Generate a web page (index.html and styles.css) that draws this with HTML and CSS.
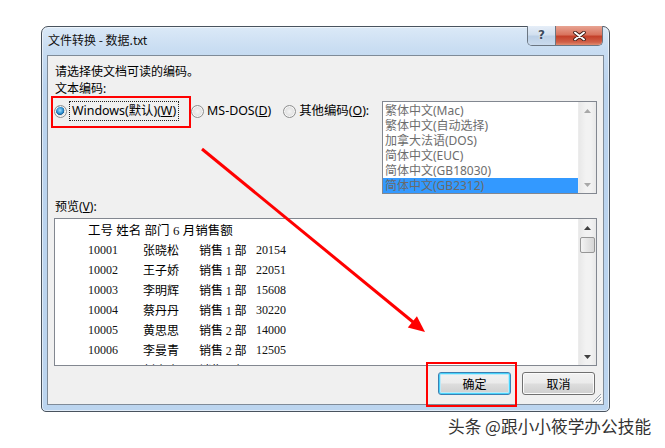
FILE: index.html
```html
<!DOCTYPE html>
<html lang="zh-CN">
<head>
<meta charset="utf-8">
<title>文件转换</title>
<link rel="stylesheet" href="styles.css">
</head>
<body>
<div class="window">
  <div class="titlebar">
    <span class="title">文件转换 - 数据.txt</span>
    <div class="caption-btns">
      <span class="cap-help">?</span>
      <span class="cap-close">
        <svg width="13" height="10" viewBox="0 0 13 10"><path d="M2 1.5 L11 8.5 M11 1.5 L2 8.5" stroke="#3a1a14" stroke-width="3.6" stroke-linecap="round"/><path d="M2 1.5 L11 8.5 M11 1.5 L2 8.5" stroke="#fff" stroke-width="2" stroke-linecap="round"/></svg>
      </span>
    </div>
  </div>
  <div class="client">
    <div class="line intro">请选择使文档可读的编码。</div>
    <div class="line label">文本编码:</div>
    <div class="enc-row">
      <div class="radios">
        <span class="radio checked"></span>
        <span class="focus">Windows(默认)(<u>W</u>)</span>
        <span class="radio gap1"></span>
        <span class="rlabel">MS-DOS(<u>D</u>)</span>
        <span class="radio gap2"></span>
        <span class="rlabel">其他编码(<u>O</u>):</span>
      </div>
      <div class="listbox">
        <div class="items">
          <div class="item">繁体中文(Mac)</div>
          <div class="item">繁体中文(自动选择)</div>
          <div class="item">加拿大法语(DOS)</div>
          <div class="item">简体中文(EUC)</div>
          <div class="item">简体中文(GB18030)</div>
          <div class="item selected">简体中文(GB2312)</div>
        </div>
        <div class="vscroll disabled">
          <span class="arrow"><svg width="7" height="4" viewBox="0 0 7 4"><path d="M0 4 L3.5 0 L7 4Z" fill="#a8a8a8"/></svg></span>
          <span class="track"></span>
          <span class="arrow"><svg width="7" height="4" viewBox="0 0 7 4"><path d="M0 0 L3.5 4 L7 0Z" fill="#a8a8a8"/></svg></span>
        </div>
      </div>
    </div>
    <div class="line plabel">预览(<u>V</u>):</div>
    <div class="preview">
      <div class="ptext">
        <div class="phead">工号 姓名 部门 <span class="num">6</span> 月销售额</div>
        <div class="prow"><span class="num">10001</span><span>张晓松</span><span>销售 <span class="num">1</span> 部</span><span class="num">20154</span></div>
        <div class="prow"><span class="num">10002</span><span>王子娇</span><span>销售 <span class="num">1</span> 部</span><span class="num">22051</span></div>
        <div class="prow"><span class="num">10003</span><span>李明辉</span><span>销售 <span class="num">1</span> 部</span><span class="num">15608</span></div>
        <div class="prow"><span class="num">10004</span><span>蔡丹丹</span><span>销售 <span class="num">1</span> 部</span><span class="num">30220</span></div>
        <div class="prow"><span class="num">10005</span><span>黄思思</span><span>销售 <span class="num">2</span> 部</span><span class="num">14000</span></div>
        <div class="prow"><span class="num">10006</span><span>李曼青</span><span>销售 <span class="num">2</span> 部</span><span class="num">12505</span></div>
        <div class="prow"><span class="num">10007</span><span>刘小小</span><span>销售 <span class="num">2</span> 部</span><span class="num">16800</span></div>
      </div>
      <div class="vscroll">
        <span class="arrow"><svg width="7" height="4" viewBox="0 0 7 4"><path d="M0 4 L3.5 0 L7 4Z" fill="#404040"/></svg></span>
        <span class="thumb"></span>
        <span class="track"></span>
        <span class="arrow"><svg width="7" height="4" viewBox="0 0 7 4"><path d="M0 0 L3.5 4 L7 0Z" fill="#404040"/></svg></span>
      </div>
    </div>
    <div class="buttons">
      <button class="btn default">确定</button>
      <button class="btn">取消</button>
    </div>
    <svg class="grip" width="11" height="11" viewBox="0 0 11 11"><path d="M10 2 L2 10 M10 5 L5 10 M10 8 L8 10" stroke="#9aa3ad" stroke-width="1"/><path d="M11 3 L3 11 M11 6 L6 11 M11 9 L9 11" stroke="#ffffff" stroke-width="1"/></svg>
  </div>
</div>

<div class="mark mark-radio"></div>
<div class="mark mark-ok"></div>
<svg class="arrow-overlay" width="665" height="448" viewBox="0 0 665 448">
  <line x1="202" y1="149" x2="413" y2="322" stroke="#ff0000" stroke-width="3"/>
  <polygon points="425,332 407.8,327.5 416.9,316.3" fill="#ff0000"/>
</svg>
<div class="watermark">头条 @跟小小筱学办公技能</div>
</body>
</html>
```
FILE: styles.css
```css
html, body {
  margin: 0;
  padding: 0;
}
body {
  width: 665px;
  height: 448px;
  overflow: hidden;
  background: #ffffff;
  position: relative;
  font-family: "Noto Sans", "Noto Sans CJK SC", sans-serif;
  font-size: 12px;
  color: #000;
}
.window {
  margin: 26px 0 0 41px;
  width: 569px;
  height: 386px;
  box-sizing: border-box;
  border: 1px solid #49535e;
  border-radius: 7px 7px 5px 5px;
  background: linear-gradient(180deg, #dbe9f7 0px, #c9ddf2 22px, #bad3ee 60px, #bcd5ef 100%);
  box-shadow: inset 0 0 0 1px rgba(255,255,255,0.55);
  padding: 0 5px 6px 5px;
  display: flex;
  flex-direction: column;
}
.titlebar {
  height: 28px;
  display: flex;
  align-items: flex-start;
}
.title {
  margin-top: 5px;
  padding-left: 1px;
  line-height: 16px;
  font-family: "Noto Sans CJK SC", sans-serif;
  font-size: 12px;
  color: #111;
}
.caption-btns {
  margin-left: auto;
  margin-right: 1px;
  margin-top: -1px;
  display: flex;
  height: 19px;
  border: 1px solid #6b7682;
  border-top: none;
  border-radius: 0 0 5px 5px;
  overflow: hidden;
}
.cap-help {
  width: 27px;
  height: 19px;
  border-right: 1px solid #6b7682;
  background: linear-gradient(180deg, #e6eef8 0%, #d2e0ef 45%, #bcd0e6 55%, #cadbee 100%);
  font-family: "DejaVu Sans", sans-serif;
  font-weight: bold;
  font-size: 12px;
  line-height: 18px;
  text-align: center;
  color: #3c4c5e;
  text-shadow: 0 0 2px #fff;
}
.cap-close {
  width: 46px;
  height: 19px;
  background: linear-gradient(180deg, #e8a493 0%, #d9745e 45%, #c4412a 55%, #d06048 85%, #e08c70 100%);
  display: flex;
  align-items: center;
  justify-content: center;
}
.client {
  position: relative;
  flex: 1;
  background: #f0f0f0;
  border: 1px solid #7f8b98;
  padding: 8px 6px 0 6px;
  display: flex;
  flex-direction: column;
  font-family: "Noto Sans", "Noto Sans CJK SC", sans-serif;
}
.line {
  line-height: 16px;
  height: 16px;
  padding-left: 1px;
  white-space: nowrap;
}
.label {
  margin-top: 1px;
}
u {
  text-decoration: underline;
  text-underline-offset: 1px;
}
.enc-row {
  margin-top: 4px;
  display: flex;
  align-items: flex-start;
  height: 93px;
}
.radios {
  display: flex;
  align-items: center;
  height: 20px;
  white-space: nowrap;
  font-size: 12.4px;
}
.radio {
  width: 11px;
  height: 11px;
  border-radius: 50%;
  border: 1px solid #8e8f8f;
  background: radial-gradient(circle at 50% 50%, #f4f4f4 0%, #e0e0e0 60%, #cfcfcf 100%);
  box-shadow: inset 0 0 0 1px #f8f8f8;
  flex: none;
}
.radio.checked {
  background: radial-gradient(circle at 45% 40%, #9fe0ff 0%, #2e8fd0 35%, #1a5f93 48%, #e6e6e6 52%, #d6d6d6 100%);
}
.radio.gap1 {
  margin-left: 12px;
}
.radio.gap2 {
  margin-left: 12px;
}
.focus {
  margin-left: 2px;
  border: 1px dotted #222;
  padding: 0 2px;
  line-height: 18px;
}
.rlabel {
  margin-left: 3px;
  line-height: 18px;
}
.listbox {
  margin-left: auto;
  width: 215px;
  height: 93px;
  box-sizing: border-box;
  border: 1px solid #828790;
  background: #fff;
  display: flex;
}
.items {
  flex: 1;
  padding-top: 1px;
  overflow: hidden;
}
.item {
  height: 15px;
  line-height: 15px;
  padding-left: 2px;
  color: #6d6d6d;
  white-space: nowrap;
}
.item.selected {
  background: #3399ff;
  color: #6a6a6a;
}
.vscroll {
  width: 17px;
  flex: none;
  display: flex;
  flex-direction: column;
  background: linear-gradient(90deg, #e8e8e8, #f2f2f2 40%, #f2f2f2 70%, #e8e8e8);
  border-left: 1px solid #ececec;
}
.vscroll .arrow {
  height: 17px;
  display: flex;
  align-items: center;
  justify-content: center;
  flex: none;
}
.vscroll .track {
  flex: 1;
}
.vscroll .thumb {
  margin: 1px 1px 0 1px;
  height: 14px;
  border: 1px solid #969696;
  border-radius: 2px;
  background: linear-gradient(90deg, #f3f3f3, #e4e4e4 50%, #d6d6d6);
  flex: none;
}
.plabel {
  margin-top: 5px;
}
.preview {
  margin-top: 3px;
  height: 148px;
  box-sizing: border-box;
  border: 1px solid #828790;
  background: #fff;
  display: flex;
  overflow: hidden;
}
.ptext {
  flex: 1;
  padding: 1px 0 0 33px;
  overflow: hidden;
  font-family: "Noto Sans CJK SC", sans-serif;
}
.phead {
  height: 20px;
  line-height: 20px;
  font-size: 12.5px;
  word-spacing: 0.5px;
  white-space: nowrap;
}
.prow {
  height: 20px;
  line-height: 20px;
  display: grid;
  grid-template-columns: 55px 56px 57px auto;
  font-size: 12px;
  white-space: nowrap;
}
.num {
  font-family: "Liberation Serif", serif;
  font-size: 12px;
  color: #111;
}
.phead .num {
  font-size: 13px;
}
.buttons {
  margin-top: 6px;
  margin-right: 2px;
  display: flex;
  justify-content: flex-end;
  gap: 11px;
}
.btn {
  width: 73px;
  height: 23px;
  box-sizing: border-box;
  border: 1px solid #707070;
  border-radius: 3px;
  background: linear-gradient(180deg, #f2f2f2 0%, #ebebeb 48%, #dddddd 52%, #cfcfcf 100%);
  box-shadow: inset 0 0 0 1px #fbfbfb;
  font-family: "Noto Sans CJK SC", sans-serif;
  font-size: 12px;
  color: #000;
  padding: 0;
  line-height: 20px;
}
.btn.default {
  border-color: #3c7fb1;
  box-shadow: inset 0 0 0 1px #48d3fb, inset 0 0 0 2px #bde9f8;
}
.grip {
  position: absolute;
  right: 1px;
  bottom: 1px;
}
.mark {
  position: absolute;
  border: 2px solid #ff0000;
  box-sizing: border-box;
}
.mark-radio {
  left: 51px;
  top: 96px;
  width: 140px;
  height: 32px;
}
.mark-ok {
  left: 426px;
  top: 362px;
  width: 91px;
  height: 45px;
}
.arrow-overlay {
  position: absolute;
  left: 0;
  top: 0;
  pointer-events: none;
}
.watermark {
  position: absolute;
  left: 448px;
  top: 415px;
  line-height: 22px;
  font-family: "Noto Sans CJK SC", sans-serif;
  font-size: 16.7px;
  color: #333;
  white-space: nowrap;
  text-shadow: 0 0 2px #fff;
}
```
